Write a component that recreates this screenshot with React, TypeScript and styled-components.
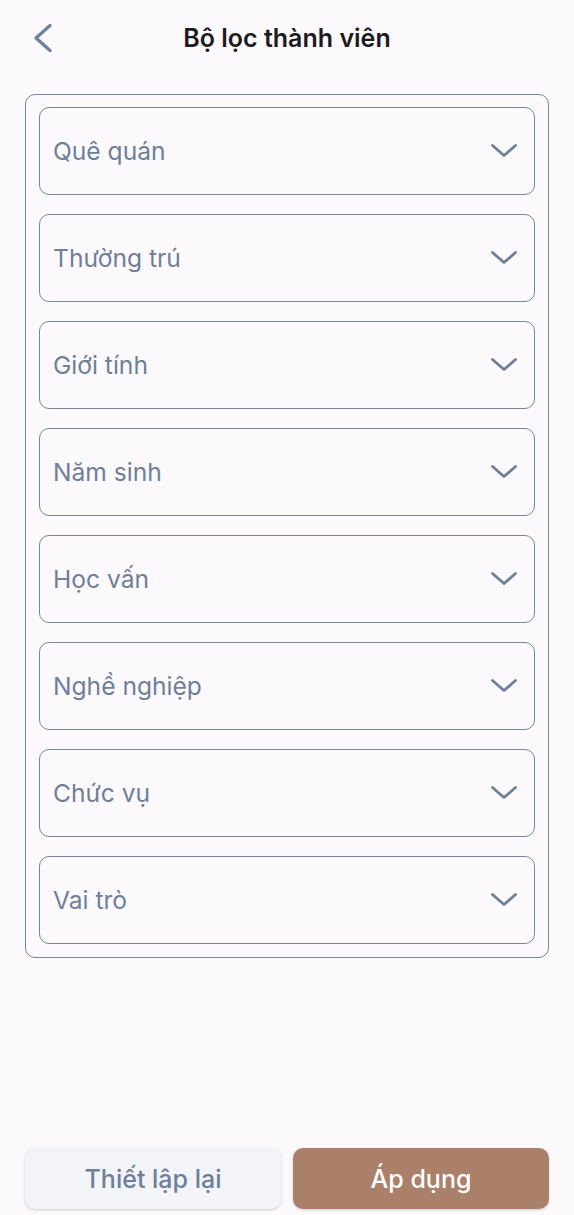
import React from "react";
import styled, { createGlobalStyle } from "styled-components";

const Global = createGlobalStyle`
  html, body { margin: 0; padding: 0; background: #fcf9fd; }
  body { font-family: Inter, "Noto Sans", sans-serif; }
  * { box-sizing: border-box; }
`;

const Page = styled.div`
  width: 574px;
  height: 1215px;
  background: #fcf9fd;
  display: flex;
  flex-direction: column;
`;

const Header = styled.header`
  height: 76px;
  display: grid;
  grid-template-columns: 64px 1fr 64px;
  align-items: center;
`;

const BackButton = styled.button`
  border: none;
  background: none;
  padding: 0 0 0 32px;
  height: 100%;
  display: flex;
  align-items: center;
  cursor: pointer;
`;

const Title = styled.h1`
  margin: 0;
  text-align: center;
  font-size: 25px;
  font-weight: 600;
  color: #1d1b20;
`;

const Panel = styled.div`
  margin: 18px 25px 0;
  border: 1.6px solid #76869e;
  border-radius: 10px;
  padding: 12px 13px 13px;
  display: flex;
  flex-direction: column;
  gap: 19px;
`;

const Field = styled.div`
  height: 88px;
  border: 1.6px solid #76869e;
  border-radius: 10px;
  display: flex;
  align-items: center;
  justify-content: space-between;
  padding: 0 16px 0 13px;
`;

const Label = styled.span`
  font-size: 24.6px;
  color: #6e7f99;
`;

const Spacer = styled.div`
  flex: 1;
`;

const Footer = styled.div`
  display: grid;
  grid-template-columns: 1fr 1fr;
  gap: 12px;
  padding: 0 25px 6px;
`;

const Button = styled.button<{ $primary?: boolean }>`
  height: 61px;
  border: none;
  border-radius: 10px;
  font-family: Inter, "Noto Sans", sans-serif;
  font-size: 25px;
  font-weight: 500;
  background: ${(p) => (p.$primary ? "#aa806a" : "#f2f4f8")};
  color: ${(p) => (p.$primary ? "#ffffff" : "#6e7f99")};
  box-shadow: 0 1px 3px rgba(0, 0, 0, 0.18);
`;

const Chevron = () => (
  <svg width="28" height="16" viewBox="0 0 28 16" fill="none">
    <path d="M2.5 2.5 L14 12.5 L25.5 2.5" stroke="#6e7f99" strokeWidth="2.8" strokeLinecap="round" strokeLinejoin="round" />
  </svg>
);

const BackIcon = () => (
  <svg width="22" height="30" viewBox="0 0 22 30" fill="none">
    <path d="M18 2.5 L4 15 L18 27.5" stroke="#6e83a0" strokeWidth="3.4" strokeLinecap="round" strokeLinejoin="round" />
  </svg>
);

const fields = [
  "Quê quán",
  "Thường trú",
  "Giới tính",
  "Năm sinh",
  "Học vấn",
  "Nghề nghiệp",
  "Chức vụ",
  "Vai trò",
];

export default function App() {
  return (
    <Page>
      <Global />
      <Header>
        <BackButton aria-label="Back">
          <BackIcon />
        </BackButton>
        <Title>Bộ lọc thành viên</Title>
        <div />
      </Header>
      <Panel>
        {fields.map((f) => (
          <Field key={f}>
            <Label>{f}</Label>
            <Chevron />
          </Field>
        ))}
      </Panel>
      <Spacer />
      <Footer>
        <Button>Thiết lập lại</Button>
        <Button $primary>Áp dụng</Button>
      </Footer>
    </Page>
  );
}
